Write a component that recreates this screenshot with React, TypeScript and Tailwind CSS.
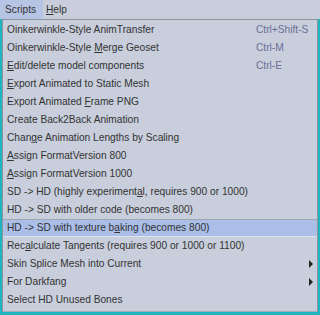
import React from "react";

type Item = {
  label: string;
  // index of the mnemonic letter, -1 for none
  m: number;
  accel?: string;
  sub?: boolean;
  selected?: boolean;
};

const ITEMS: Item[] = [
  { label: "Oinkerwinkle-Style AnimTransfer", m: -1, accel: "Ctrl+Shift-S" },
  { label: "Oinkerwinkle-Style Merge Geoset", m: 19, accel: "Ctrl-M" },
  { label: "Edit/delete model components", m: 0, accel: "Ctrl-E" },
  { label: "Export Animated to Static Mesh", m: 0 },
  { label: "Export Animated Frame PNG", m: 16 },
  { label: "Create Back2Back Animation", m: -1 },
  { label: "Change Animation Lengths by Scaling", m: 4 },
  { label: "Assign FormatVersion 800", m: 0 },
  { label: "Assign FormatVersion 1000", m: 0 },
  { label: "SD -> HD (highly experimental, requires 900 or 1000)", m: 27 },
  { label: "HD -> SD with older code (becomes 800)", m: -1 },
  { label: "HD -> SD with texture baking (becomes 800)", m: 23, selected: true },
  { label: "Recalculate Tangents (requires 900 or 1000 or 1100)", m: 3 },
  { label: "Skin Splice Mesh into Current", m: -1, sub: true },
  { label: "For Darkfang", m: -1, sub: true },
  { label: "Select HD Unused Bones", m: -1 },
];

function Label({ text, m }: { text: string; m: number }) {
  if (m < 0) return <>{text}</>;
  return (
    <>
      {text.slice(0, m)}
      <span className="underline underline-offset-1">{text[m]}</span>
      {text.slice(m + 1)}
    </>
  );
}

export default function App() {
  return (
    <div
      className="w-[320px] h-[315px] bg-[#1fb5c0] overflow-hidden text-[10.2px] text-[#333333]"
      style={{ fontFamily: '"Liberation Sans", Arial, sans-serif' }}
    >
      {/* menu bar */}
      <div className="h-[19px] bg-[#c8cedb] flex items-stretch">
        <div className="w-[43px] pl-[5px] bg-[#b7c5e4] flex items-center">Scripts</div>
        <div className="pl-[3px] flex items-center">
          <Label text="Help" m={0} />
        </div>
      </div>

      {/* popup */}
      <div className="ml-[2px] mr-[2px] h-[293px] bg-[#c8cedb] border border-[#8e949e] border-b-[#a4aab4] pt-[1px] flex flex-col">
        {ITEMS.map((it, i) => (
          <div
            key={i}
            className={`h-[18px] shrink-0 flex items-center pl-[4px] pr-[3px] ${
              it.selected ? "bg-[#aabee8] border-t border-t-[#a0a6b0] border-b border-b-[#dfe3ea]" : ""
            }`}
          >
            <span className="flex-1 whitespace-nowrap">
              <Label text={it.label} m={it.m} />
            </span>
            {it.accel && <span className="w-[58px] text-[#6b6f99] whitespace-nowrap">{it.accel}</span>}
            {it.sub && (
              <svg width="4" height="8" viewBox="0 0 4 8" className="mr-[1px]">
                <path d="M0 0 L4 4 L0 8 Z" fill="#222" />
              </svg>
            )}
          </div>
        ))}
      </div>
    </div>
  );
}
